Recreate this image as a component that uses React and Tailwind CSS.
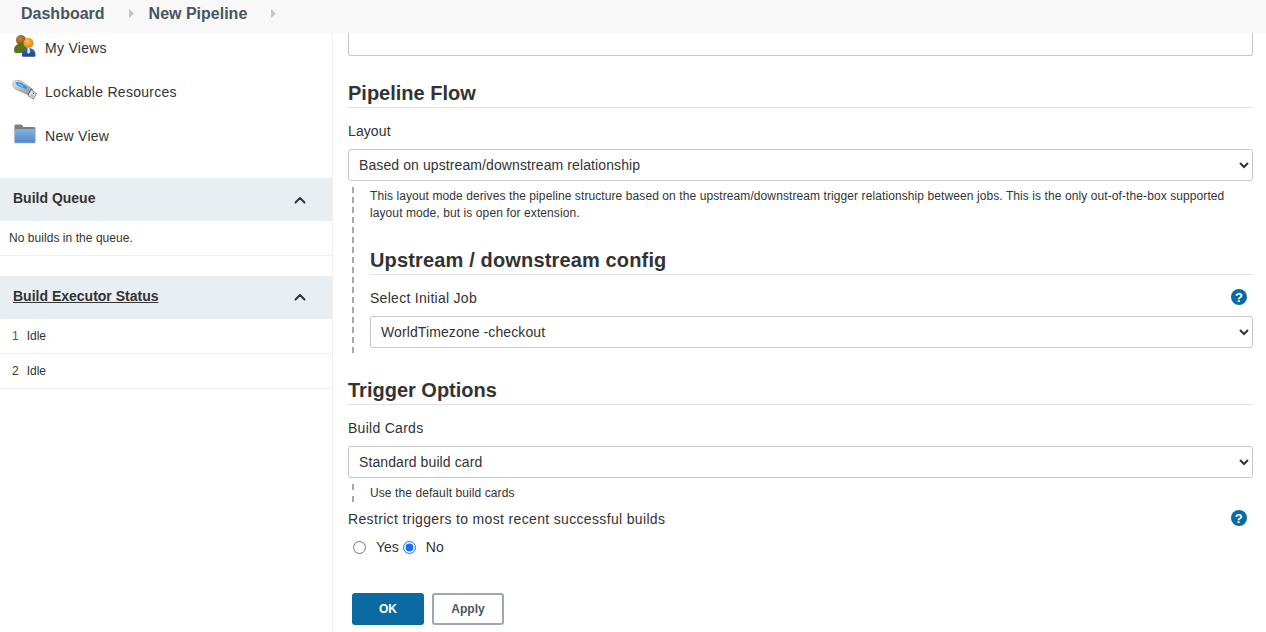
import React from 'react';

const PeopleIcon = () => (
  <svg width="24" height="24" viewBox="0 0 24 24">
    <defs>
      <radialGradient id="headBack" cx=".4" cy=".35" r=".7"><stop offset="0" stopColor="#c08a35" /><stop offset="1" stopColor="#7a4f12" /></radialGradient>
      <radialGradient id="headFront" cx=".4" cy=".35" r=".7"><stop offset="0" stopColor="#fbc04c" /><stop offset="1" stopColor="#d97f10" /></radialGradient>
      <linearGradient id="bodyFront" x1="0" y1="0" x2="0" y2="1"><stop offset="0" stopColor="#2f6fc0" /><stop offset="1" stopColor="#1d4585" /></linearGradient>
    </defs>
    <circle cx="8" cy="6" r="5" fill="url(#headBack)" />
    <path d="M1 16c0-4 3-6.500 7-6.500s6 2 6 5V19H3c-1.300 0-2-1-2-3z" fill="#5c7418" />
    <circle cx="15.500" cy="9" r="5" fill="url(#headFront)" />
    <path d="M9 21c0-4.500 2.500-7 6.500-7s7 2.500 7 7c0 1-.5 1.800-1.500 1.800H10.500C9.500 22.800 9 22 9 21z" fill="url(#bodyFront)" />
    <path d="M14.700 14h1.800l.5 4.200-1.400 1.600-1.400-1.600z" fill="#e8eef5" />
  </svg>
);

const UsbIcon = () => (
  <svg width="26" height="24" viewBox="0 0 26 24" className="translate-y-px">
    <defs>
      <linearGradient id="usbBody" x1="0" y1="0" x2="1" y2="1"><stop offset="0" stopColor="#e6eaee" /><stop offset="1" stopColor="#8a9198" /></linearGradient>
    </defs>
    <path d="M1 3.500C2.500.8 6.500.8 10 2.500l9 6.500-3.500 6.500L4 10.500C1.500 9 0 6 1 3.500z" fill="url(#usbBody)" stroke="#8c939a" strokeWidth=".6" />
    <path d="M3.500 3.500c1.500-1 4-.6 6 .6l6 4.200-1.300 2L6.500 7C4.800 6 3.500 4.800 3.500 3.500z" fill="#2f95e6" />
    <path d="M6 4.500l5 3" stroke="#bfe2fb" strokeWidth=".9" />
    <path d="M15.500 15.500L19 9l2 1.500-3.500 6.500z" fill="#666c72" />
    <path d="M19 10.500l5.500 4-3.200 5.500-5.300-3.500z" fill="#dfe3e6" stroke="#4c5156" strokeWidth=".7" />
    <path d="M20.800 14l1.200.8M19.500 16.300l1.200.8" stroke="#2e3236" strokeWidth="1" />
  </svg>
);

const FolderIcon = () => (
  <svg width="22" height="20" viewBox="0 0 22 20">
    <defs>
      <linearGradient id="folderFront" x1="0" y1="0" x2="0" y2="1"><stop offset="0" stopColor="#82b3e4" /><stop offset="1" stopColor="#4f88c6" /></linearGradient>
    </defs>
    <path d="M.5 2C.5 1 1 .5 2 .5h5.500l2 2.500H20c.8 0 1.300.5 1.300 1.300V8H.5z" fill="#7b7d80" />
    <path d="M.5 5.500h20.800v12.500c0 .6-.4 1-1 1H1.500c-.6 0-1-.4-1-1z" fill="url(#folderFront)" stroke="#a9b4bf" strokeWidth=".6" />
  </svg>
);

const Chevron = ({ className }) => (
  <svg width="12" height="8" viewBox="0 0 12 8" fill="none" stroke="#333" strokeWidth="2" strokeLinecap="round" strokeLinejoin="round" className={className}>
    <path d="M1.500 6.500L6 2l4.500 4.500" />
  </svg>
);

const HelpIcon = () => (
  <span className="flex h-4 w-4 -translate-y-px items-center justify-center rounded-full bg-[#0b6aa2] text-[13px] leading-none font-bold text-white">?</span>
);

const Crumb = () => (
  <svg width="5" height="9" viewBox="0 0 5 9" className="shrink-0">
    <path d="M0 0l5 4.500L0 9z" fill="#c4c6c8" />
  </svg>
);

const SideLink = ({ icon, label }) => (
  <div className="flex h-11 items-center">
    <span className="flex w-[45px] shrink-0 justify-center pl-[5px] -translate-y-[2px]">{icon}</span>
    <span className="text-[14px] tracking-[.28px] text-[#333]">{label}</span>
  </div>
);

const PaneHeader = ({ title, underline }) => (
  <div className="flex h-[43px] items-center justify-between bg-[#e9eef2] pr-[26px] pl-[13px]">
    <span className={`pb-[2px] text-[14px] font-bold text-[#333] ${underline ? 'underline' : ''}`}>{title}</span>
    <Chevron className={underline ? '-translate-y-px' : ''} />
  </div>
);

const Heading = ({ children }) => (
  <h2 className="h-[29px] border-b border-[#e2e2e2] text-[20px] leading-[28px] font-bold text-[#333]">{children}</h2>
);

const Field = ({ value }) => (
  <select defaultValue={value} className="h-8 w-full rounded-[3px] border border-[#c8c8c8] bg-white pl-[6px] text-[14px] tracking-[.1px] text-[#333]">
    <option>{value}</option>
  </select>
);

const Note = ({ className, children }) => (
  <div className={`ml-1 border-l-2 border-dashed border-[#a8a8a8] pl-[16px] text-[12px] leading-[17px] tracking-[.09px] text-[#333] ${className}`}>{children}</div>
);

export default function App() {
  return (
    <div className="flex h-[632px] flex-col overflow-hidden bg-white font-['Liberation_Sans',Arial,sans-serif]">
      <div className="flex h-[33px] shrink-0 items-center bg-[#f8f8f8] pb-[6px] pl-[21px] text-[16px] font-bold text-[#4a5560]">
        <span>Dashboard</span>
        <span className="mr-[15px] ml-[24px]"><Crumb /></span>
        <span>New Pipeline</span>
        <span className="ml-[24px]"><Crumb /></span>
      </div>

      <div className="flex min-h-0 flex-1">
        <aside className="w-[333px] shrink-0 border-r border-[#eef0f2]">
          <div className="-mt-[7px]">
            <SideLink icon={<PeopleIcon />} label="My Views" />
            <SideLink icon={<UsbIcon />} label="Lockable Resources" />
            <SideLink icon={<FolderIcon />} label="New View" />
          </div>

          <div className="mt-[20px]">
            <PaneHeader title="Build Queue" />
            <div className="flex h-[35px] items-center border-b border-[#eef0f2] pl-[9px] text-[12px] tracking-[.05px] text-[#333]">No builds in the queue.</div>
          </div>

          <div className="mt-[20px]">
            <PaneHeader title="Build Executor Status" underline />
            <div className="flex h-[35px] items-center gap-[8px] border-b border-[#eef0f2] pl-[12px] text-[12px] text-[#333]"><span className="text-[#555]">1</span><span>Idle</span></div>
            <div className="flex h-[35px] items-center gap-[8px] border-b border-[#eef0f2] pl-[12px] text-[12px] text-[#333]"><span>2</span><span>Idle</span></div>
          </div>
        </aside>

        <main className="min-w-0 flex-1 pr-[13px] pl-[15px]">
          <div className="h-[23px] rounded-b-[3px] border border-t-0 border-[#c8c8c8]" />

          <div className="mt-[23px]"><Heading>Pipeline Flow</Heading></div>
          <div className="mt-[15px] text-[14px] leading-4 tracking-[.1px] text-[#333]">Layout</div>
          <div className="mt-[10px]"><Field value="Based on upstream/downstream relationship" /></div>

          <Note className="mt-[6px] h-[166px]">
            <p className="pt-px pr-4">This layout mode derives the pipeline structure based on the upstream/downstream trigger relationship between jobs. This is the only out-of-the-box supported layout mode, but is open for extension.</p>
            <div className="mt-[24px]"><Heading><span className="tracking-[.15px]">Upstream / downstream config</span></Heading></div>
            <div className="mt-[15px] flex items-center justify-between pr-[6px] text-[14px] leading-4 tracking-[.28px] text-[#333]">
              <span>Select Initial Job</span>
              <HelpIcon />
            </div>
            <div className="mt-[10px]"><Field value="WorldTimezone -checkout" /></div>
          </Note>

          <div className="mt-[23px]"><Heading>Trigger Options</Heading></div>
          <div className="mt-[15px] text-[14px] leading-4 tracking-[.28px] text-[#333]">Build Cards</div>
          <div className="mt-[10px]"><Field value="Standard build card" /></div>
          <Note className="mt-[6px] h-[18px] pt-px">Use the default build cards</Note>

          <div className="mt-[9px] flex items-center justify-between pr-[6px] text-[14px] leading-4 tracking-[.34px] text-[#333]">
            <span>Restrict triggers to most recent successful builds</span>
            <HelpIcon />
          </div>
          <div className="mt-[12px] flex items-center pl-[5px] text-[14px] leading-4 text-[#333]">
            <input type="radio" name="restrict" className="m-0 h-[13px] w-[13px]" />
            <span className="mr-[4px] ml-[10px]">Yes</span>
            <input type="radio" name="restrict" defaultChecked className="m-0 h-[13px] w-[13px] accent-[#1a6fe8]" />
            <span className="ml-[10px]">No</span>
          </div>

          <div className="mt-[38px] flex gap-2 pl-1">
            <button className="h-8 w-[72px] rounded-[3px] bg-[#0b6aa2] text-[12px] font-bold text-white">OK</button>
            <button className="h-8 w-[72px] rounded-[3px] border-2 border-[#9aa8b5] bg-white text-[12px] font-bold text-[#4a5560]">Apply</button>
          </div>
        </main>
      </div>
    </div>
  );
}
